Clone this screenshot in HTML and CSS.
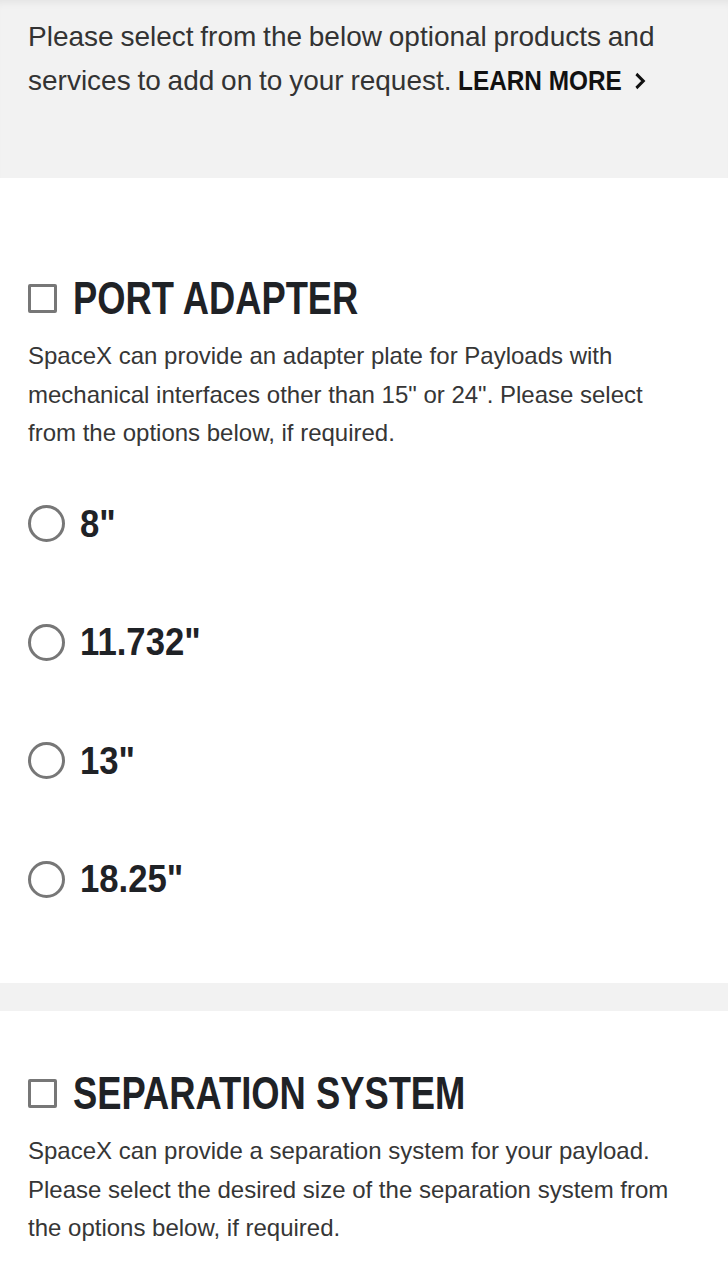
FILE: index.html
```html
<!DOCTYPE html>
<html lang="en">
<head>
<meta charset="utf-8">
<title>Optional products</title>
<link rel="stylesheet" href="styles.css">
</head>
<body>
<div class="intro">
  <p class="intro-text">Please select from the below optional products and services to add on to your request. <a class="learn" href="#">LEARN MORE<svg class="chev" width="16" height="20" viewBox="0 0 16 20"><path d="M5 3 L13 10 L5 17" fill="none" stroke="#111" stroke-width="3.2"/></svg></a></p>
</div>

<section class="option first">
  <label class="opt-head"><span class="checkbox"></span><span class="opt-title">PORT ADAPTER</span></label>
  <p class="desc">SpaceX can provide an adapter plate for Payloads with mechanical interfaces other than 15" or 24". Please select from the options below, if required.</p>
  <ul class="radios">
    <li class="radio-row"><span class="radio"></span><span class="radio-label">8"</span></li>
    <li class="radio-row"><span class="radio"></span><span class="radio-label">11.732"</span></li>
    <li class="radio-row"><span class="radio"></span><span class="radio-label">13"</span></li>
    <li class="radio-row"><span class="radio"></span><span class="radio-label">18.25"</span></li>
  </ul>
</section>

<div class="band"></div>

<section class="option second">
  <label class="opt-head"><span class="checkbox"></span><span class="opt-title">SEPARATION SYSTEM</span></label>
  <p class="desc">SpaceX can provide a separation system for your payload. Please select the desired size of the separation system from the options below, if required.</p>
</section>
</body>
</html>
```

FILE: styles.css
```css
html, body {
  margin: 0;
  padding: 0;
  background: #ffffff;
}
body {
  font-family: "Liberation Sans", Arial, sans-serif;
  color: #333;
}
.intro {
  background: #f2f2f2;
  height: 178px;
  box-sizing: border-box;
  padding: 15px 28px 0 28px;
  box-shadow: inset 0 8px 8px -6px rgba(0,0,0,0.07);
}
.intro-text {
  margin: 0;
  font-size: 28px;
  line-height: 44px;
  color: #333;
  word-spacing: -1px;
}
.learn {
  display: inline-block;
  font-weight: bold;
  font-size: 28px;
  line-height: 44px;
  color: #111;
  text-decoration: none;
  white-space: nowrap;
  word-spacing: 0;
  transform: scaleX(0.87);
  transform-origin: left center;
}
.chev {
  margin-left: 12px;
  vertical-align: -1px;
}
.option {
  padding: 0 36px 0 28px;
}
.option.first {
  padding-top: 94px;
  padding-bottom: 80px;
}
.option.second {
  padding-top: 56px;
  padding-bottom: 40px;
}
.opt-head {
  display: flex;
  align-items: center;
  height: 52px;
  gap: 16px;
}
.checkbox {
  width: 29px;
  height: 29px;
  box-sizing: border-box;
  border: 3.5px solid #777;
  border-radius: 2px;
  flex: none;
}
.opt-title {
  display: inline-block;
  font-weight: bold;
  font-size: 46px;
  line-height: 52px;
  color: #1f2226;
  white-space: nowrap;
  transform: scaleX(0.79);
  transform-origin: left center;
}
.desc {
  margin: 13px 0 0 0;
  font-size: 24px;
  line-height: 38.5px;
  color: #363636;
}
.radios {
  list-style: none;
  margin: 47px 0 0 0;
  padding: 0;
  display: flex;
  flex-direction: column;
  gap: 70.67px;
}
.radio-row {
  display: flex;
  align-items: center;
  height: 48px;
  gap: 15px;
}
.radio {
  width: 37px;
  height: 37px;
  box-sizing: border-box;
  border: 3.5px solid #777;
  border-radius: 50%;
  flex: none;
}
.radio-label {
  display: inline-block;
  font-weight: bold;
  font-size: 39px;
  line-height: 48px;
  color: #1f2226;
  transform: scaleX(0.89);
  transform-origin: left center;
}
.band {
  height: 28px;
  background: #f2f2f2;
}
```
